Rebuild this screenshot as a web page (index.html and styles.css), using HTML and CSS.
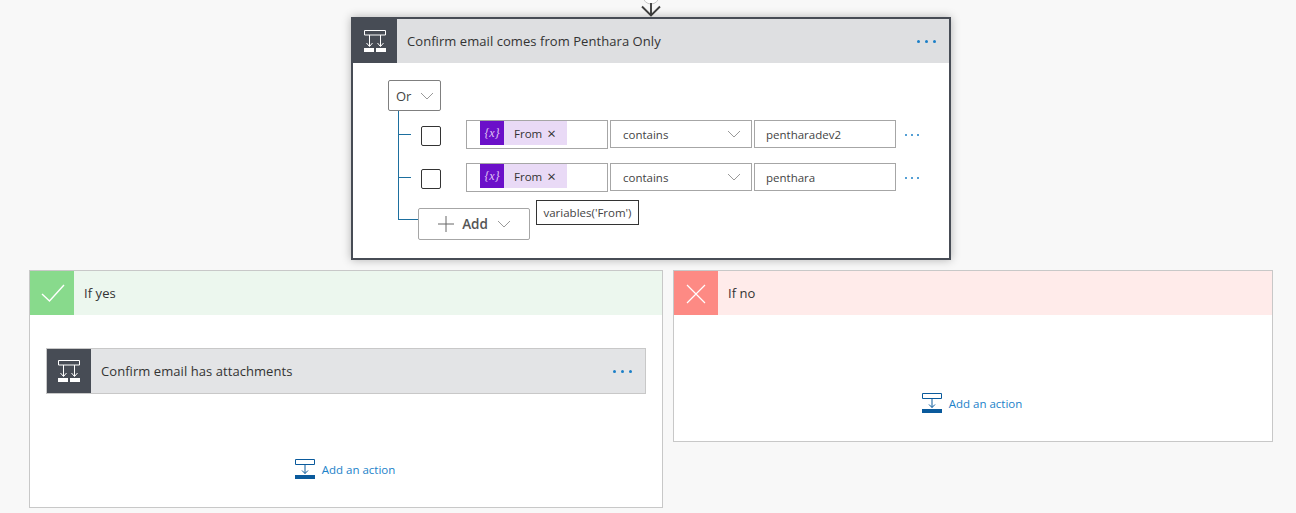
FILE: index.html
```html
<!DOCTYPE html>
<html lang="en">
<head>
<meta charset="utf-8">
<title>Condition</title>
<link rel="stylesheet" href="styles.css">
</head>
<body>
<svg class="flow-arrow" width="24" height="17" viewBox="0 0 24 17"><circle cx="12" cy="-4" r="8" fill="#fff" stroke="#c8c8c8"/><path d="M12 3V15.500M3 6.500L12 15.500L21 6.500" fill="none" stroke="#404040" stroke-width="1.900"/></svg>

<section class="condition">
  <header class="head head-condition">
    <div class="icon-cell dark">
      <svg width="32" height="32" viewBox="0 0 32 32"><path d="M5.500 5.500H26.500V10H5.500Z" fill="none" stroke="#fff"/><path d="M10.500 10V21M7.500 18L10.500 21.500L13.500 18M21.500 10V21M18.500 18L21.500 21.500L24.500 18" fill="none" stroke="#fff"/><path d="M5 23H15V27H5ZM17 23H27V27H17Z" fill="#fff"/></svg>
    </div>
    <span class="title">Confirm email comes from Penthara Only</span>
    <span class="dots"><i></i><i></i><i></i></span>
  </header>
  <div class="cond-body">
    <div class="or-select"><span>Or</span><svg class="chev" width="14" height="8" viewBox="0 0 14 8"><path d="M1 1L7 7L13 1" fill="none" stroke="#999"/></svg></div>
    <div class="rows">
      <div class="row">
        <span class="stub"></span><span class="check"></span>
        <div class="token-field"><span class="token"><span class="token-ico"><em>{x}</em></span><span class="token-name">From</span><span class="token-x">×</span></span></div>
        <div class="field select"><span>contains</span><svg class="chev" width="14" height="8" viewBox="0 0 14 8"><path d="M1 1L7 7L13 1" fill="none" stroke="#999"/></svg></div>
        <div class="field value">pentharadev2</div>
        <span class="dots small"><i></i><i></i><i></i></span>
      </div>
      <div class="row">
        <span class="stub"></span><span class="check"></span>
        <div class="token-field"><span class="token"><span class="token-ico"><em>{x}</em></span><span class="token-name">From</span><span class="token-x">×</span></span></div>
        <div class="field select"><span>contains</span><svg class="chev" width="14" height="8" viewBox="0 0 14 8"><path d="M1 1L7 7L13 1" fill="none" stroke="#999"/></svg></div>
        <div class="field value">penthara</div>
        <span class="dots small"><i></i><i></i><i></i></span>
      </div>
    </div>
    <div class="add-row">
      <span class="stub long"></span>
      <div class="add-btn">
        <svg width="18" height="18" viewBox="0 0 18 18"><path d="M9 1V17M1 9H17" stroke="#666" fill="none"/></svg>
        <b>Add</b>
        <svg class="chev" width="14" height="8" viewBox="0 0 14 8"><path d="M1 1L7 7L13 1" fill="none" stroke="#999"/></svg>
      </div>
    </div>
    <div class="tooltip">variables('From')</div>
  </div>
</section>

<div class="branches">
  <section class="branch yes">
    <header class="head head-yes">
      <div class="icon-cell green"><svg width="28" height="28" viewBox="0 0 28 28"><path d="M4 15L11.500 22L26 6" fill="none" stroke="#fff" stroke-width="1.400"/></svg></div>
      <span class="title">If yes</span>
    </header>
    <div class="branch-body">
      <div class="nested">
        <div class="icon-cell dark"><svg width="32" height="32" viewBox="0 0 32 32"><path d="M5.500 5.500H26.500V10H5.500Z" fill="none" stroke="#fff"/><path d="M10.500 10V21M7.500 18L10.500 21.500L13.500 18M21.500 10V21M18.500 18L21.500 21.500L24.500 18" fill="none" stroke="#fff"/><path d="M5 23H15V27H5ZM17 23H27V27H17Z" fill="#fff"/></svg></div>
        <span class="title">Confirm email has attachments</span>
        <span class="dots"><i></i><i></i><i></i></span>
      </div>
      <div class="add-action">
        <svg width="20" height="20" viewBox="0 0 20 20"><path d="M.5 .5H19.500V5.500H.5Z" fill="none" stroke="#0a5a9c"/><path d="M10 6V14.500M7 11.500L10 14.500L13 11.500" fill="none" stroke="#0a5a9c"/><path d="M0 16H20V20H0Z" fill="#0a5a9c"/></svg>
        <span>Add an action</span>
      </div>
    </div>
  </section>
  <section class="branch no">
    <header class="head head-no">
      <div class="icon-cell red"><svg width="28" height="28" viewBox="0 0 28 28"><path d="M5 6L23 24M23 6L5 24" fill="none" stroke="#fff" stroke-width="1.200"/></svg></div>
      <span class="title">If no</span>
    </header>
    <div class="branch-body">
      <div class="add-action">
        <svg width="20" height="20" viewBox="0 0 20 20"><path d="M.5 .5H19.500V5.500H.5Z" fill="none" stroke="#0a5a9c"/><path d="M10 6V14.500M7 11.500L10 14.500L13 11.500" fill="none" stroke="#0a5a9c"/><path d="M0 16H20V20H0Z" fill="#0a5a9c"/></svg>
        <span>Add an action</span>
      </div>
    </div>
  </section>
</div>
</body>
</html>
```
FILE: styles.css
```css
* { box-sizing: border-box; }
html, body { height: 100%; }
body {
  margin: 0;
  padding-left: 6px;
  background: #f8f8f8;
  font-family: "Open Sans", "Noto Sans", "Liberation Sans", sans-serif;
  font-size: 12px;
  color: #333;
  display: flex;
  flex-direction: column;
  align-items: center;
  overflow: hidden;
}
.flow-arrow { display: block; flex: none; }
.condition {
  width: 600px;
  height: 243px;
  flex: none;
  background: #fff;
  border: 2px solid #474c55;
  box-shadow: 0 0 9px rgba(0,0,0,.28);
}
.head { display: flex; align-items: center; height: 44px; }
.head-condition { background: #dedfe1; }
.head-yes { background: #ecf7ee; }
.head-no { background: #ffebea; }
.icon-cell {
  width: 44px;
  height: 44px;
  flex: none;
  display: flex;
  align-items: center;
  justify-content: center;
}
.dark { background: #474c55; }
.green { background: #88da8c; }
.red { background: #fd8a84; }
.title { margin-left: 10px; font-size: 13px; letter-spacing: .06px; color: #333; white-space: nowrap; }
.dots { margin-left: auto; display: flex; gap: 5px; margin-right: 13px; }
.dots i { display: block; width: 3px; height: 3px; border-radius: 50%; background: #1b7fc7; }
.dots.small { margin: 0 0 0 9px; gap: 4px; align-self: center; }
.dots.small i { width: 2px; height: 2px; background: #1b7fc7; }

.cond-body { position: relative; padding: 17px 0 0 35px; }
.or-select {
  width: 53px;
  height: 31px;
  display: flex;
  align-items: center;
  justify-content: space-between;
  padding: 0 6px 0 7px;
  border: 1px solid #7f7f7f;
  border-radius: 2px;
  background: #fff;
  font-size: 13px;
  color: #444;
}
.rows {
  margin-left: 10px;
  border-left: 1px solid #1d6f9f;
  padding: 9px 0 28px;
  display: flex;
  flex-direction: column;
  gap: 14px;
}
.row { display: flex; height: 29px; align-items: flex-start; }
.stub { width: 12px; height: 1px; margin-top: 14px; background: #1d6f9f; flex: none; }
.check {
  width: 20px;
  height: 20px;
  margin: 6px 25px 0 10px;
  flex: none;
  border: 1px solid #333;
  border-radius: 2px;
  background: #fff;
}
.token-field {
  width: 142px;
  height: 29px;
  flex: none;
  border: 1px solid #a6a6a6;
  padding: 0 0 0 13px;
  background: #fff;
}
.token {
  display: flex;
  align-items: center;
  width: 87px;
  height: 24px;
  background: #e9daf6;
}
.token-ico {
  width: 24px;
  height: 24px;
  flex: none;
  background: #6b10c9;
  color: #e0c8f5;
  display: flex;
  align-items: center;
  justify-content: center;
  font-family: "Liberation Serif", serif;
  font-size: 12px;
}
.token-ico em { font-style: italic; }
.token-name { margin-left: 10px; font-size: 11.5px; color: #333; }
.token-x { margin-left: 5px; font-size: 15px; line-height: 1; color: #333; }
.field {
  width: 142px;
  height: 28px;
  flex: none;
  margin-left: 2px;
  border: 1px solid #a6a6a6;
  background: #fff;
  font-size: 11.5px;
  color: #444;
  display: flex;
  align-items: center;
  padding: 0 11px;
}
.select { justify-content: space-between; padding: 0 10px 0 12px; }
.add-row { display: flex; align-items: flex-start; margin: -12px 0 0 10px; }
.stub.long { width: 20px; margin-top: 11px; }
.add-btn {
  width: 112px;
  height: 32px;
  display: flex;
  align-items: center;
  justify-content: center;
  gap: 7px;
  border: 1px solid #a6a6a6;
  border-radius: 2px;
  background: #fff;
  font-size: 13.5px;
  color: #555;
}
.add-btn b { font-weight: 600; margin-right: 2px; }
.tooltip {
  position: absolute;
  left: 183px;
  top: 137px;
  width: 103px;
  height: 25px;
  border: 1px solid #333;
  background: #fff;
  font-size: 11.5px;
  color: #444;
  display: flex;
  align-items: center;
  justify-content: center;
  white-space: nowrap;
}

.branches {
  display: flex;
  align-items: flex-start;
  gap: 10px;
  margin-top: 10px;
  flex: none;
}
.branch { background: #fff; border: 1px solid #c8c8c8; flex: none; }
.yes { width: 634px; height: 238px; }
.no { width: 600px; height: 172px; }
.branch-body { display: flex; flex-direction: column; align-items: center; padding-top: 33px; }
.no .branch-body { padding-top: 78px; }
.nested {
  width: 600px;
  height: 46px;
  display: flex;
  align-items: center;
  background: #e3e4e6;
  border: 1px solid #c8c8c8;
}
.add-action { display: flex; align-items: center; gap: 7px; padding-right: 2px; color: #1b82c9; font-size: 11.5px; }
.add-action svg { display: block; }
.nested + .add-action { margin-top: 65px; }
```
